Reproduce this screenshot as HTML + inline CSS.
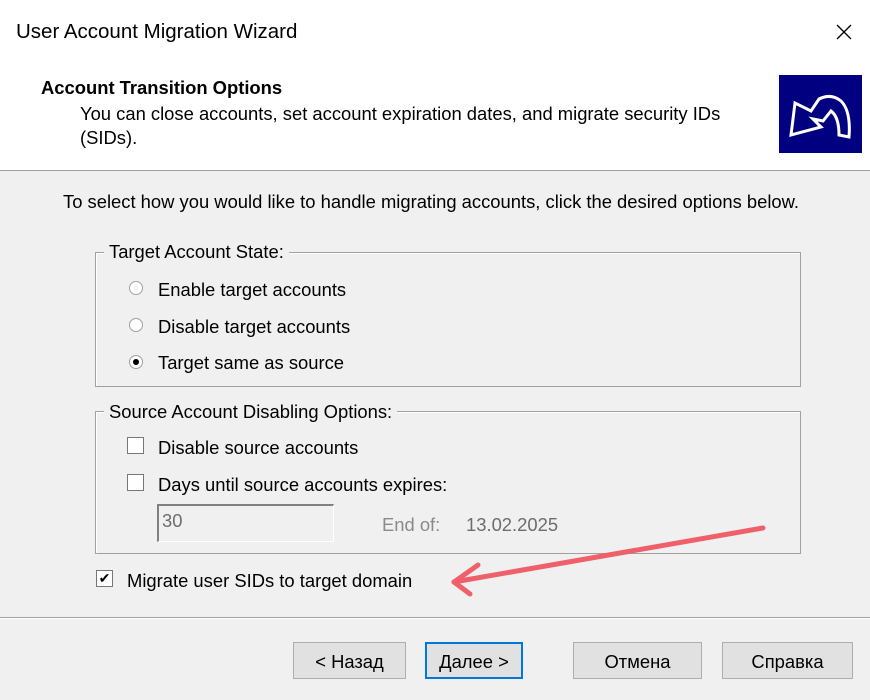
<!DOCTYPE html>
<html><head><meta charset="utf-8"><style>
body{margin:0;width:870px;height:700px;background:#f0f0f0;font-family:"Liberation Sans",sans-serif;font-size:18.4px;color:#000;position:relative;overflow:hidden}
.a{position:absolute;white-space:nowrap}
.hdr{position:absolute;left:0;top:0;width:870px;height:170px;background:#fff;border-bottom:1px solid #a0a0a0}
.grp{position:absolute;border:1px solid #a0a0a0;box-shadow:1px 1px 0 #fff inset}
.lbl{position:absolute;background:#f0f0f0;padding:0 5px}
.rad{position:absolute;width:12px;height:12px;border-radius:50%;background:#fff;border:1px solid #a0a0a0}
.chk{position:absolute;width:15px;height:15px;background:#fff;border:1px solid #777}
.btn{position:absolute;top:642px;height:37px;background:#e1e1e1;border:1px solid #adadad;text-align:center;line-height:37px;box-sizing:border-box}
</style></head><body>
<div class="hdr"></div>
<div class="a" style="left:16px;top:20px;font-size:20.5px">User Account Migration Wizard</div>
<svg class="a" style="left:836px;top:24px" width="16" height="16"><path d="M1 1L15 15M15 1L1 15" stroke="#000" stroke-width="1.3"/></svg>
<div class="a" style="left:41px;top:77px;font-weight:bold">Account Transition Options</div>
<div class="a" style="left:80px;top:103px">You can close accounts, set account expiration dates, and migrate security IDs</div>
<div class="a" style="left:80px;top:127px">(SIDs).</div>
<svg class="a" style="left:779px;top:75px" width="83" height="78"><rect width="83" height="78" fill="#000080"/><path d="M12 60 L16 28 L32 36 L40 24 Q52 18 62 26 Q72 36 70 62 L60 60 Q60 42 52 36 L44 46 L34 44 L42 52 Z" fill="none" stroke="#fff" stroke-width="3"/></svg>
<div class="a" style="left:63px;top:191px">To select how you would like to handle migrating accounts, click the desired options below.</div>
<div class="grp" style="left:95px;top:252px;width:704px;height:133px"></div>
<div class="lbl" style="left:104px;top:241px">Target Account State:</div>
<div class="rad" style="left:129px;top:281px"></div><div class="a" style="left:158px;top:279px">Enable target accounts</div>
<div class="rad" style="left:129px;top:318px"></div><div class="a" style="left:158px;top:316px">Disable target accounts</div>
<div class="rad" style="left:129px;top:355px"><div style="position:absolute;left:3px;top:3px;width:6px;height:6px;border-radius:50%;background:#000"></div></div><div class="a" style="left:158px;top:352px">Target same as source</div>
<div class="grp" style="left:95px;top:411px;width:704px;height:141px"></div>
<div class="lbl" style="left:104px;top:401px">Source Account Disabling Options:</div>
<div class="chk" style="left:127px;top:437px"></div><div class="a" style="left:158px;top:437px">Disable source accounts</div>
<div class="chk" style="left:127px;top:474px"></div><div class="a" style="left:158px;top:474px">Days until source accounts expires:</div>
<div class="a" style="left:157px;top:504px;width:177px;height:38px;border:1px solid #fff;border-top:2px solid #808080;border-left:2px solid #808080;background:#f0f0f0;color:#6d6d6d;padding-left:3px;line-height:30px;box-sizing:border-box">30</div>
<div class="a" style="left:382px;top:514px;color:#8a8a8a">End of:</div>
<div class="a" style="left:466px;top:514px;color:#6d6d6d">13.02.2025</div>
<div class="chk" style="left:96px;top:570px;font-size:14px;line-height:15px;text-align:center">✔</div>
<div class="a" style="left:127px;top:570px">Migrate user SIDs to target domain</div>
<svg class="a" style="left:0;top:0" width="870" height="700"><g stroke="#f0606a" stroke-width="5" stroke-linecap="round" fill="none"><line x1="763" y1="528" x2="454" y2="582"/><line x1="454" y1="582" x2="478" y2="565"/><line x1="454" y1="582" x2="470" y2="594"/></g></svg>
<div class="a" style="left:0;top:617px;width:870px;border-top:1px solid #a0a0a0;border-bottom:1px solid #fff"></div>
<div class="btn" style="left:293px;width:113px">&lt; Назад</div>
<div class="btn" style="left:425px;width:98px;border:2px solid #0078d7;line-height:35px">Далее &gt;</div>
<div class="btn" style="left:573px;width:129px">Отмена</div>
<div class="btn" style="left:722px;width:131px">Справка</div>
</body></html>
